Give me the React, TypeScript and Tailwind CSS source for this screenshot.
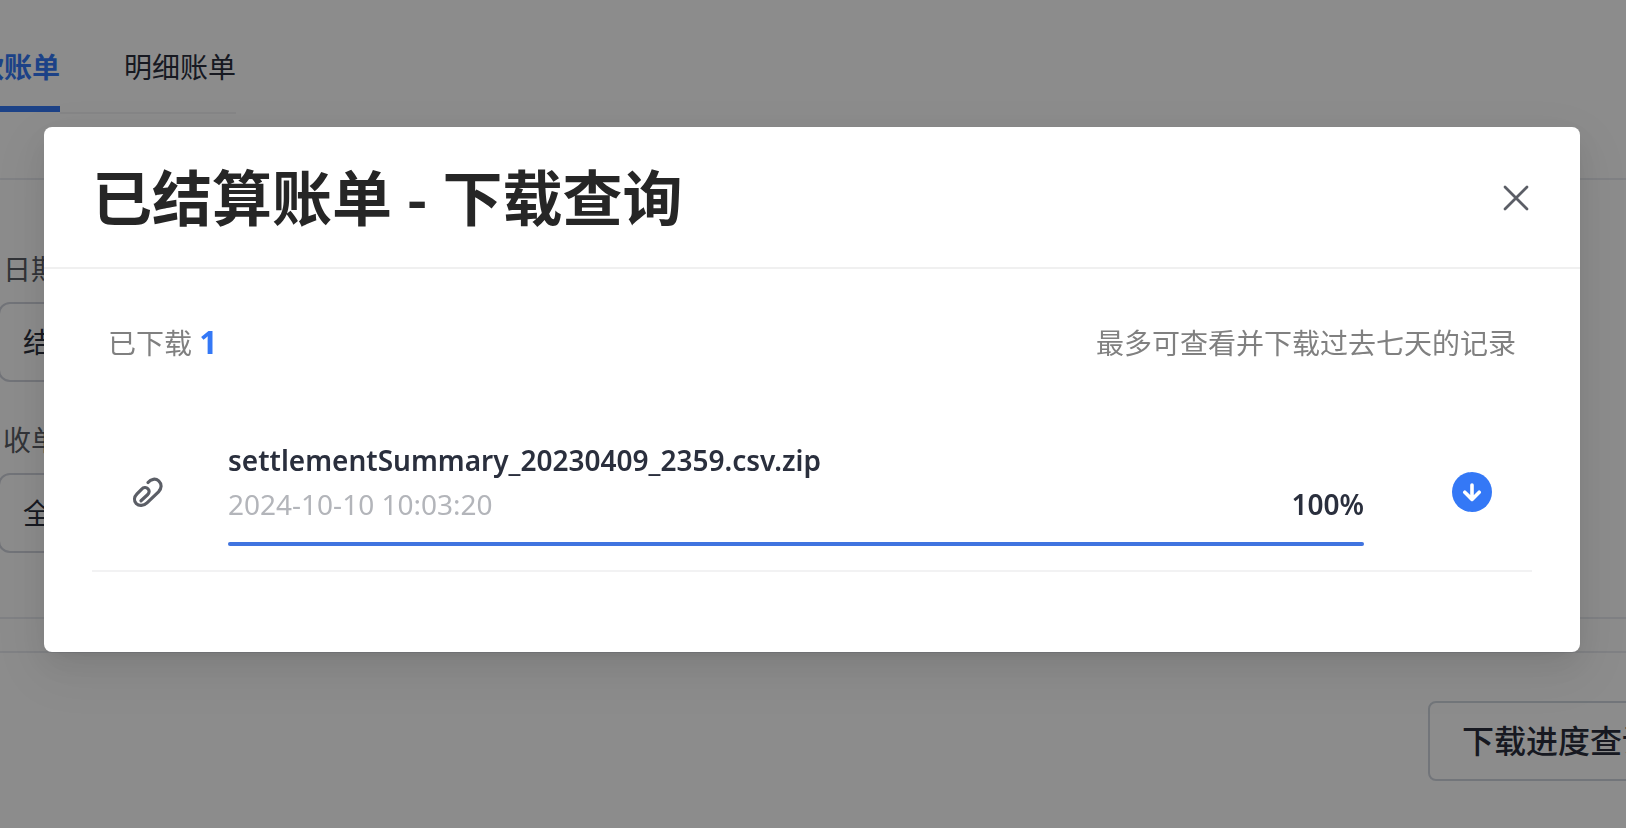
import React from "react";

interface DownloadRecord {
  fileName: string;
  createdAt: string;
  percent: number;
}

const records: DownloadRecord[] = [
  {
    fileName: "settlementSummary_20230409_2359.csv.zip",
    createdAt: "2024-10-10 10:03:20",
    percent: 100,
  },
];

const CloseIcon: React.FC = () => (
  <svg width="28" height="28" viewBox="0 0 28 28" fill="none" stroke="#5b5e66" strokeWidth="2.8" strokeLinecap="round">
    <path d="M3 3l22 22M25 3L3 25" />
  </svg>
);

const ClipIcon: React.FC = () => (
  <svg width="32" height="32" viewBox="0 0 32 32" fill="none" stroke="#5b5e66" strokeWidth="3.2" strokeLinecap="round">
    <path d="M16 6.5C19 2.900 23.500 2.100 26.700 4.900C30 8.100 29.800 12.300 26.500 15.800L15 26.800C11.500 30.100 7 30.300 4.300 27.600C1.700 24.800 2 20.800 5 17.800L9.500 13.300C11.500 11.300 14.300 11.100 16 12.800C17.700 14.500 17.500 16.800 15.500 18.800L9 24.800" />
  </svg>
);

const DownloadIcon: React.FC = () => (
  <svg width="40" height="40" viewBox="0 0 40 40" fill="none">
    <circle cx="20" cy="20" r="20" fill="#3478f6" />
    <path d="M20 13v14.500M12.800 20.200L20 27.400L27.200 20.200" stroke="#fff" strokeWidth="3.600" strokeLinecap="round" strokeLinejoin="round" />
  </svg>
);

const FilterField: React.FC<{ id: string; label: string; value: string }> = ({ id, label, value }) => (
  <div className="flex flex-col gap-[14px]">
    <label htmlFor={id} className="pl-[3px] text-[28px] leading-[38px] text-[#5b5e66]">
      {label}
    </label>
    <select
      id={id}
      className="-ml-0.5 h-20 w-80 appearance-none rounded-xl border-2 border-[#d0d3dc] bg-white px-[23px] text-[28px] text-[#2a2f3d]"
    >
      <option>{value}</option>
    </select>
  </div>
);

const BillPage: React.FC = () => (
  <div className="flex min-h-screen flex-col overflow-hidden bg-white">
    <nav className="flex pt-9">
      <div className="flex w-[60px] justify-end">
        <button type="button" className="h-[76px] shrink-0 border-b-6 border-[#3478f6] pb-2 text-[28px] font-semibold text-[#3478f6]">
          收款账单
        </button>
      </div>
      <button type="button" className="h-[78px] border-b-2 border-[#f3f3f5] pb-3.5 pl-16 text-[28px] text-[#2a2f3d]">
        明细账单
      </button>
    </nav>

    <section className="mt-16 flex flex-col gap-[39px] border-y-2 border-[#e9ebf0] pt-[70px] pb-16">
      <FilterField id="date-type" label="日期类型" value="结算日期" />
      <FilterField id="merchant" label="收单商户" value="全部" />
    </section>

    <section className="mt-8 flex justify-end border-t-2 border-[#e9ebf0] pt-12">
      <div className="flex w-[198px]">
        <button
          type="button"
          className="h-20 shrink-0 rounded-lg border-2 border-[#d0d6df] px-8 text-[32px] font-medium text-[#2a2f3d]"
        >
          下载进度查询
        </button>
      </div>
    </section>
  </div>
);

const RecordRow: React.FC<{ record: DownloadRecord }> = ({ record }) => (
  <li className="flex items-center border-b-2 border-[#f2f2f3] px-10 pt-8 pb-6">
    <ClipIcon />
    <div className="ml-16 flex-1">
      <p className="text-[28px] leading-11 font-semibold text-[#2a2f3d]">{record.fileName}</p>
      <div className="flex justify-between text-[28px] leading-11">
        <span className="text-[#b3b5ba]">{record.createdAt}</span>
        <span className="font-semibold text-[#2a2f3d]">{record.percent}%</span>
      </div>
      <div className="mt-4 h-1 rounded-full bg-[#eeeeee]">
        <div className="h-1 rounded-full bg-[#4074e0]" style={{ width: `${record.percent}%` }} />
      </div>
    </div>
    <button type="button" aria-label="下载" className="ml-22">
      <DownloadIcon />
    </button>
  </li>
);

const DownloadModal: React.FC = () => (
  <div className="fixed inset-0 bg-black/45 pt-[127px] pr-[46px] pl-11">
    <div
      role="dialog"
      aria-labelledby="modal-title"
      className="rounded-lg bg-white shadow-[0_12px_32px_rgba(0,0,0,0.08),0_6px_12px_-8px_rgba(0,0,0,0.12),0_18px_56px_16px_rgba(0,0,0,0.05)]"
    >
      <header className="flex items-center justify-between border-b-2 border-[#f0f0f0] pt-[33px] pr-[50px] pb-[31px] pl-12">
        <h1 id="modal-title" className="text-[60px] leading-[76px] font-semibold text-[#262626]">
          已结算账单 - 下载查询
        </h1>
        <button type="button" aria-label="关闭">
          <CloseIcon />
        </button>
      </header>
      <div className="px-12 pt-12 pb-20">
        <div className="flex items-center justify-between px-4 text-[28px] leading-[50px] text-[#808080]">
          <p>
            已下载 <strong className="text-[32px] font-bold text-[#3478f6]">1</strong>
          </p>
          <p>最多可查看并下载过去七天的记录</p>
        </div>
        <ul className="mt-[38px]">
          {records.map((record) => (
            <RecordRow key={record.fileName} record={record} />
          ))}
        </ul>
      </div>
    </div>
  </div>
);

const App: React.FC = () => (
  <div className="font-['Noto_Sans','Noto_Sans_CJK_SC',sans-serif]">
    <BillPage />
    <DownloadModal />
  </div>
);

export default App;
